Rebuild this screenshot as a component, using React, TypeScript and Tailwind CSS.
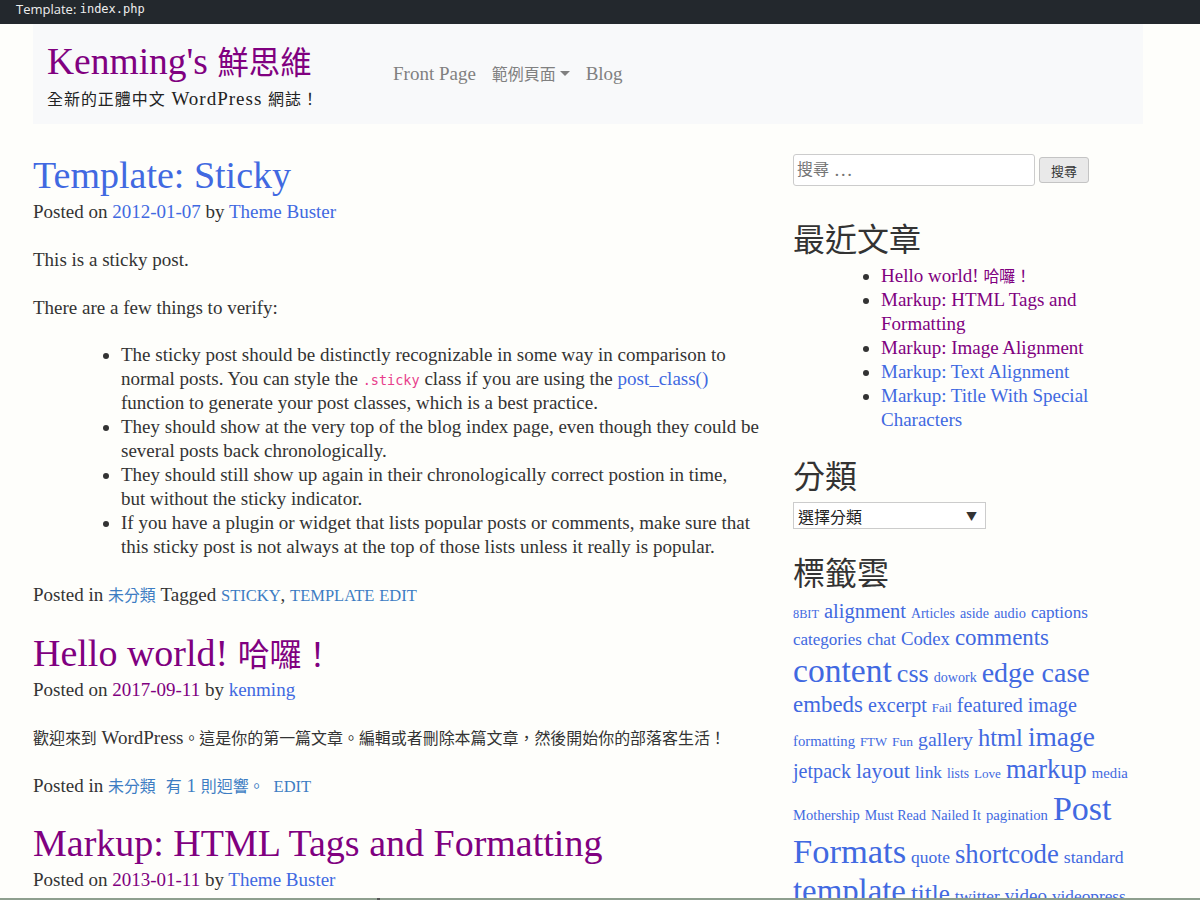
import React from "react";

function C({ children }: { children: React.ReactNode }) {
  return <span className="text-[0.84em] leading-none">{children}</span>;
}

type Tag = [string, number];
const tagRows: { cls: string; items: Tag[] }[] = [
  { cls: "h-[26px]", items: [["8BIT", 12.3], ["alignment", 20.5], ["Articles", 13.9], ["aside", 14.1], ["audio", 14.4], ["captions", 17.1]] },
  { cls: "h-[27px]", items: [["categories", 17], ["chat", 17.4], ["Codex", 18.8], ["comments", 22.9]] },
  { cls: "h-[40px]", items: [["content", 33.6], ["css", 26], ["dowork", 14.1], ["edge case", 28]] },
  { cls: "h-[30px]", items: [["embeds", 22.9], ["excerpt", 20], ["Fail", 12.9], ["featured image", 20.1]] },
  { cls: "h-[32px]", items: [["formatting", 14.7], ["FTW", 12.8], ["Fun", 13.5], ["gallery", 19.8], ["html", 24.5], ["image", 27.4]] },
  { cls: "h-[36px]", items: [["jetpack", 20.1], ["layout", 21.6], ["link", 17.4], ["lists", 13.6], ["Love", 13.1], ["markup", 26.5], ["media", 14.7]] },
  { cls: "h-[42px]", items: [["Mothership", 14.5], ["Must Read", 14], ["Nailed It", 14.2], ["pagination", 14.7], ["Post", 34]] },
  { cls: "h-[41px]", items: [["Formats", 34.5], ["quote", 17.5], ["shortcode", 26.7], ["standard", 17.7]] },
  { cls: "h-[40px]", items: [["template", 32.8], ["title", 25], ["twitter", 17.2], ["video", 19], ["videopress", 17.3]] },
];

function Meta({ date, dateVisited, author }: { date: string; dateVisited?: boolean; author: string }) {
  return (
    <div className="mt-[3px] leading-[24px]">
      Posted on{" "}
      <a className={dateVisited ? "text-[#800080]" : "text-[#4169e1]"}>{date}</a> by{" "}
      <a className="text-[#4169e1]">{author}</a>
    </div>
  );
}

function SideHeading({ children, cls }: { children: React.ReactNode; cls: string }) {
  return (
    <h2 className={"text-[32px] leading-[40px] font-['Noto_Sans_CJK_TC',sans-serif] text-[#333] " + cls}>
      {children}
    </h2>
  );
}

export default function App() {
  return (
    <div className="min-h-screen bg-[#fefefb] text-[#333] text-[19px] leading-[24px] font-['Liberation_Serif','Noto_Sans_CJK_TC',serif]">
      {/* top bar */}
      <div className="h-[24px] bg-[#23282d] pl-[16px] flex items-start text-[13px] leading-[18px] text-[#eeeeee]">
        <span className="font-['Open_Sans',sans-serif]">Template:&nbsp;</span>
        <span className="font-['DejaVu_Sans_Mono',monospace] text-[12px] leading-[18px]">index.php</span>
      </div>

      {/* header */}
      <header className="ml-[33px] w-[1110px] h-[100px] bg-[#f8f9fa] flex">
        <div className="w-[360px] pl-[14px] pt-[17px]">
          <div className="text-[37.5px] leading-[42px] text-[#800080] whitespace-nowrap">
            Kenming's <C>鮮思維</C>
          </div>
          <div className="mt-[4px] leading-[24px] tracking-[1px] text-[#222] whitespace-nowrap">
            <C>全新的正體中文</C> WordPress <C>網誌！</C>
          </div>
        </div>
        <nav className="mt-[38px] h-[24px] flex items-start gap-[16px] text-[#808080] whitespace-nowrap">
          <a>Front Page</a>
          <a>
            <C>範例頁面</C>
            <span className="inline-block ml-[4px] align-[4px] w-0 h-0 border-t-[5px] border-t-[#808080] border-x-[5px] border-x-transparent"></span>
          </a>
          <a>Blog</a>
        </nav>
      </header>

      <div className="ml-[33px] w-[1110px] flex">
        {/* main */}
        <main className="w-[730px] pt-[29px]">
          <article>
            <h1 className="text-[38px] leading-[44px] text-[#4169e1] whitespace-nowrap">Template: Sticky</h1>
            <Meta date="2012-01-07" author="Theme Buster" />
            <p className="mt-[24px]">This is a sticky post.</p>
            <p className="mt-[24px]">There are a few things to verify:</p>
            <ul className="mt-[23px] pl-[88px] list-disc whitespace-nowrap">
              <li>
                The sticky post should be distinctly recognizable in some way in comparison to
                <br />
                normal posts. You can style the{" "}
                <code className="font-['DejaVu_Sans_Mono',monospace] text-[13.5px] leading-none text-[#e83e8c]">.sticky</code>{" "}
                class if you are using the <a className="text-[#4169e1]">post_class()</a>
                <br />
                function to generate your post classes, which is a best practice.
              </li>
              <li>
                They should show at the very top of the blog index page, even though they could be
                <br />
                several posts back chronologically.
              </li>
              <li>
                They should still show up again in their chronologically correct postion in time,
                <br />
                but without the sticky indicator.
              </li>
              <li>
                If you have a plugin or widget that lists popular posts or comments, make sure that
                <br />
                this sticky post is not always at the top of those lists unless it really is popular.
              </li>
            </ul>
            <div className="mt-[24px] whitespace-nowrap">
              Posted in <a className="text-[#3d7dc3]"><C>未分類</C></a> Tagged{" "}
              <a className="text-[#3d7dc3] text-[16.5px] leading-none">STICKY</a>,{" "}
              <a className="text-[#3d7dc3] text-[16.5px] leading-none">TEMPLATE</a>{" "}
              <a className="text-[#3d7dc3] text-[16.5px] leading-none">EDIT</a>
            </div>
          </article>

          <article className="mt-[24px]">
            <h1 className="text-[38px] leading-[44px] text-[#800080] whitespace-nowrap">
              Hello world! <C>哈囉！</C>
            </h1>
            <Meta date="2017-09-11" dateVisited author="kenming" />
            <p className="mt-[24px] whitespace-nowrap">
              <C>歡迎來到</C> WordPress<C>。這是你的第一篇文章。編輯或者刪除本篇文章，然後開始你的部落客生活！</C>
            </p>
            <div className="mt-[24px] whitespace-nowrap">
              Posted in <a className="text-[#3d7dc3]"><C>未分類</C></a>
              <a className="ml-[10px] text-[#3d7dc3]"><C>有</C> 1 <C>則迴響。</C></a>
              <a className="ml-[9px] text-[#3d7dc3] text-[16.5px] leading-none">EDIT</a>
            </div>
          </article>

          <article className="mt-[23px]">
            <h1 className="text-[38px] leading-[44px] text-[#800080] whitespace-nowrap">
              Markup: HTML Tags and Formatting
            </h1>
            <Meta date="2013-01-11" dateVisited author="Theme Buster" />
          </article>
        </main>

        {/* sidebar */}
        <aside className="ml-[30px] w-[350px] pt-[30px]">
          <div className="flex items-center gap-[4px]">
            <div className="w-[242px] h-[32px] border border-[#cccccc] rounded-[3px] bg-white pl-[3px] flex items-center text-[#757575] whitespace-nowrap">
              <C>搜尋</C>&nbsp;…
            </div>
            <button className="w-[50px] h-[26px] bg-[#e9e9e9] border border-[#c4c4c4] rounded-[3px] text-[13px] leading-none text-[#333] font-['Noto_Sans_CJK_TC',sans-serif]">
              搜尋
            </button>
          </div>

          <SideHeading cls="mt-[31px]">最近文章</SideHeading>
          <ul className="mt-[7px] pl-[88px] list-disc">
            <li><a className="text-[#800080]">Hello world! <C>哈囉！</C></a></li>
            <li><a className="text-[#800080]">Markup: HTML Tags and Formatting</a></li>
            <li><a className="text-[#800080]">Markup: Image Alignment</a></li>
            <li><a className="text-[#4169e1]">Markup: Text Alignment</a></li>
            <li><a className="text-[#4169e1]">Markup: Title With Special Characters</a></li>
          </ul>

          <SideHeading cls="mt-[22px]">分類</SideHeading>
          <div className="mt-[8px] w-[193px] h-[27px] border border-[#cccccc] bg-white flex items-center justify-between pl-[4px] pr-[8px] text-[16px] text-[#222] font-['Noto_Sans_CJK_TC',sans-serif]">
            <span>選擇分類</span>
            <span className="text-[11px] text-[#333]">▼</span>
          </div>

          <SideHeading cls="mt-[22px]">標籤雲</SideHeading>
          <div className="mt-[10px]">
            {tagRows.map((row, i) => (
              <div key={i} className={"flex items-baseline gap-x-[5px] whitespace-nowrap " + row.cls}>
                {row.items.map(([t, s]) => (
                  <a key={t} className="text-[#4169e1] leading-none" style={{ fontSize: s + "px" }}>
                    {t}
                  </a>
                ))}
              </div>
            ))}
          </div>
        </aside>
      </div>

      {/* bottom edge */}
      <div className="fixed bottom-0 left-0 right-0 h-[2px] bg-[#8e9f8e]">
        <div className="ml-[377px] w-[3px] h-[2px] bg-[#555]"></div>
      </div>
    </div>
  );
}
